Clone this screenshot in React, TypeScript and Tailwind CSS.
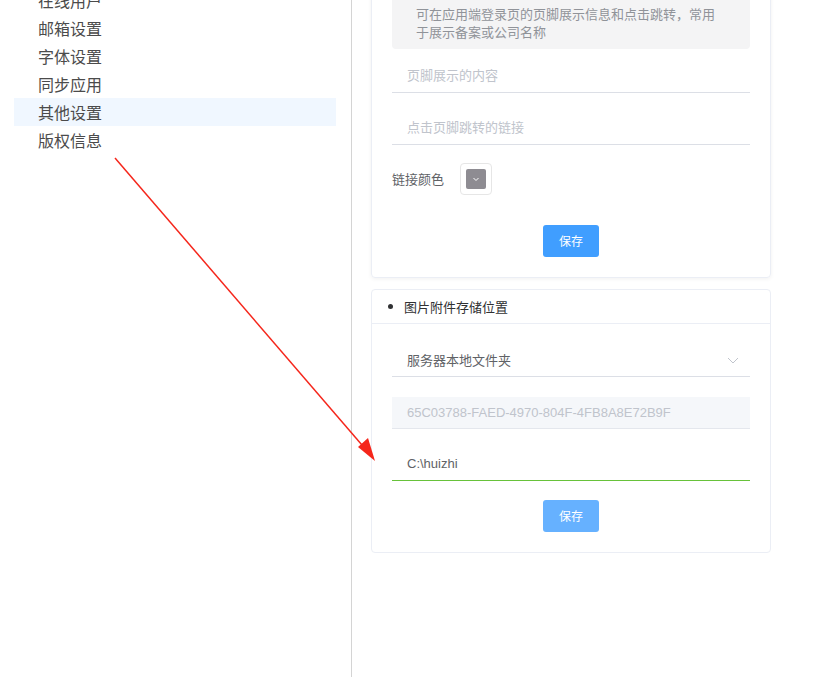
export default function App() {
  const items = ["在线用户", "邮箱设置", "字体设置", "同步应用", "其他设置", "版权信息"];
  return (
    <div className="relative w-[828px] h-[677px] overflow-hidden bg-white flex" style={{ fontFamily: '"Noto Sans CJK SC", "Liberation Sans", sans-serif' }}>
      <div className="w-[351px] shrink-0 pl-[14px] pr-[15px] pt-0 -mt-[14px]">
        {items.map((t) => (
          <div key={t} className={`h-[28px] flex items-center pl-[24px] text-[16px] text-[#4b4b4b] ${t === "其他设置" ? "bg-[#f0f7ff]" : ""}`}>{t}</div>
        ))}
      </div>
      <div className="w-px bg-[#d4d4d4] h-full shrink-0" />
      <div className="pl-[19px] flex flex-col gap-[12px]">
        <div className="w-[400px] border border-[#ebeef5] rounded-[4px] px-[20px] pb-[20px] -mt-[10px] shadow-[0_1px_4px_rgba(0,0,0,0.06)]">
          <div className="bg-[#f4f4f5] rounded-b-[4px] px-[24px] pt-[14px] pb-[8px] text-[13px] leading-[18px] text-[#909399]">
            可在应用端登录页的页脚展示信息和点击跳转，常用<br />于展示备案或公司名称
          </div>
          <div className="mt-[9px] h-[35px] border-b border-[#dcdfe6] flex items-center pl-[15px] text-[13px] text-[#c0c4cc]">页脚展示的内容</div>
          <div className="mt-[17px] h-[35px] border-b border-[#dcdfe6] flex items-center pl-[15px] text-[13px] text-[#c0c4cc]">点击页脚跳转的链接</div>
          <div className="mt-[18px] flex items-center">
            <span className="text-[13px] text-[#606266] w-[68px]">链接颜色</span>
            <div className="w-[32px] h-[32px] border border-[#e6e6e6] rounded-[4px] p-[5px]">
              <div className="w-full h-full bg-[#8e8c92] rounded-[2px] flex items-center justify-center">
                <svg width="10" height="10" viewBox="0 0 10 10"><path d="M2.5 4l2.5 2.5L7.5 4" stroke="#fff" strokeWidth="1" fill="none" /></svg>
              </div>
            </div>
          </div>
          <div className="mt-[30px] flex justify-center">
            <button className="w-[56px] h-[32px] bg-[#409eff] text-white text-[12px] rounded-[3px]">保存</button>
          </div>
        </div>
        <div className="w-[400px] border border-[#ebeef5] rounded-[4px] -mt-px">
          <div className="h-[34px] border-b border-[#ebeef5] flex items-center pl-[16px] text-[13px] text-[#303133]">
            <span className="w-[5px] h-[5px] rounded-full bg-[#303133] mr-[11px]" />图片附件存储位置
          </div>
          <div className="px-[20px] pb-[20px]">
            <div className="mt-[19px] h-[34px] border-b border-[#dcdfe6] flex items-center justify-between pl-[15px] pr-[10px] text-[13px] text-[#606266]">
              服务器本地文件夹
              <svg width="14" height="14" viewBox="0 0 14 14"><path d="M2 5l5 5 5-5" stroke="#c0c4cc" strokeWidth="1" fill="none" /></svg>
            </div>
            <div className="mt-[20px] h-[32px] bg-[#f5f7fa] border-b border-[#e4e7ed] flex items-center pl-[15px] text-[13px] text-[#c0c4cc]" style={{ fontFamily: '"Liberation Sans", sans-serif' }}>65C03788-FAED-4970-804F-4FB8A8E72B9F</div>
            <div className="mt-[18px] h-[34px] border-b border-[#67c23a] flex items-center pl-[15px] text-[13px] text-[#606266]" style={{ fontFamily: '"Liberation Sans", sans-serif' }}>C:\huizhi</div>
            <div className="mt-[19px] flex justify-center">
              <button className="w-[56px] h-[32px] bg-[#66b1ff] text-white text-[12px] rounded-[3px]">保存</button>
            </div>
          </div>
        </div>
      </div>
      <svg className="absolute left-0 top-0 pointer-events-none" width="828" height="677">
        <line x1="115" y1="158" x2="368" y2="452" stroke="#f5261b" strokeWidth="1.5" />
        <polygon points="375,461 358,447 368,438" fill="#f5261b" />
      </svg>
    </div>
  );
}
